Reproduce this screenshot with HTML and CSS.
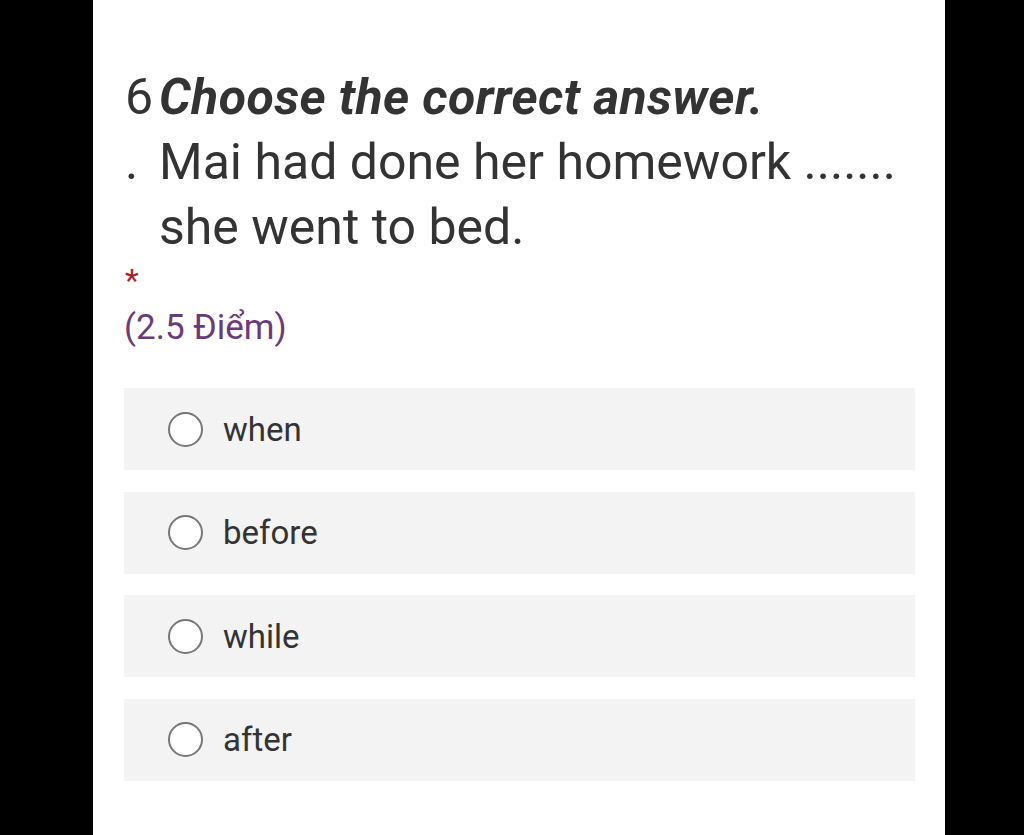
FILE: index.html
```html
<!DOCTYPE html>
<html lang="vi">
<head>
<meta charset="utf-8">
<title>Question 6</title>
<link rel="stylesheet" href="styles.css">
</head>
<body>
<div class="page">
  <div class="card">
    <div class="question">
      <div class="qnum">6<br>.</div>
      <div class="qtext">
        <strong><em>Choose the correct answer.</em></strong><br>
        Mai had done her homework ....... she went to bed.
      </div>
    </div>
    <div class="required">*</div>
    <div class="points">(2.5 Điểm)</div>
    <div class="options">
      <label class="option"><span class="radio"></span><span class="label">when</span></label>
      <label class="option"><span class="radio"></span><span class="label">before</span></label>
      <label class="option"><span class="radio"></span><span class="label">while</span></label>
      <label class="option"><span class="radio"></span><span class="label">after</span></label>
    </div>
  </div>
</div>
</body>
</html>
```
FILE: styles.css
```css
html, body {
  margin: 0;
  padding: 0;
  background: #000;
  height: 100%;
}
.page {
  display: flex;
  justify-content: flex-start;
  height: 100%;
  padding-left: 93px;
  box-sizing: border-box;
}
.card {
  width: 852px;
  background: #fff;
  box-sizing: border-box;
  padding: 65px 30px 0 31px;
  font-family: Roboto, "Noto Sans", sans-serif;
  color: #333;
}
.question {
  display: flex;
  font-size: 50px;
  line-height: 65px;
}
.qnum {
  width: 35px;
  flex: none;
  padding-left: 1px;
  box-sizing: border-box;
}
.qtext {
  flex: 1;
}
.qtext strong {
  font-weight: 700;
  letter-spacing: 0.38px;
}
.required {
  color: #a4262c;
  font-size: 32px;
  line-height: 36px;
  margin-top: 2px;
  padding-left: 1px;
}
.points {
  color: #6b3a7a;
  font-size: 35px;
  line-height: 44px;
  margin-top: 8px;
}
.options {
  display: flex;
  flex-direction: column;
  gap: 21.67px;
  margin-top: 38px;
}
.option {
  display: flex;
  align-items: center;
  height: 82px;
  background: #f3f3f3;
  padding-left: 44px;
}
.radio {
  width: 31px;
  height: 31px;
  border: 2px solid #777;
  border-radius: 50%;
  background: #fff;
  flex: none;
}
.label {
  margin-left: 20px;
  font-size: 33px;
  color: #333;
}
```
